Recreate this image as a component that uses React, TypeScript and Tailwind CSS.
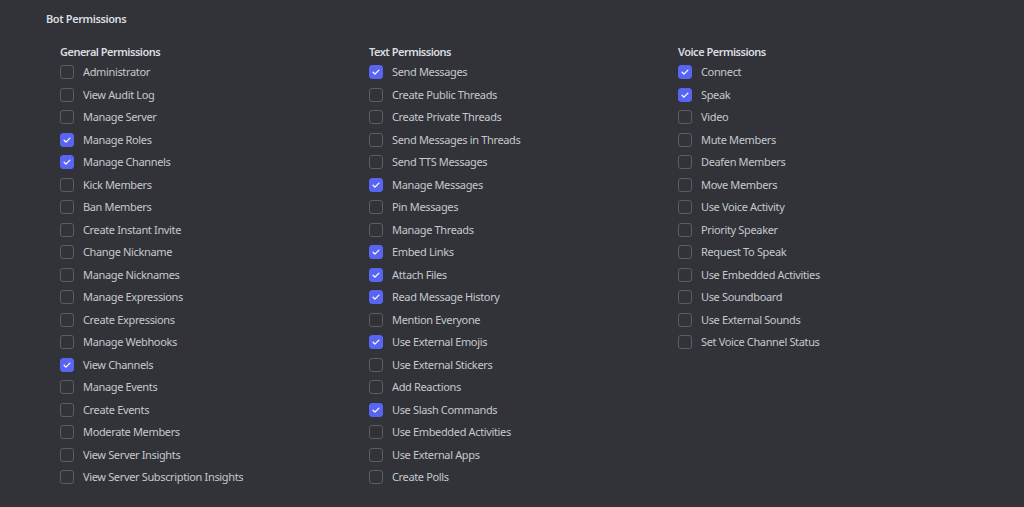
import { useState } from "react";

type Perm = { label: string; checked?: boolean };

const general: Perm[] = [
  { label: "Administrator" },
  { label: "View Audit Log" },
  { label: "Manage Server" },
  { label: "Manage Roles", checked: true },
  { label: "Manage Channels", checked: true },
  { label: "Kick Members" },
  { label: "Ban Members" },
  { label: "Create Instant Invite" },
  { label: "Change Nickname" },
  { label: "Manage Nicknames" },
  { label: "Manage Expressions" },
  { label: "Create Expressions" },
  { label: "Manage Webhooks" },
  { label: "View Channels", checked: true },
  { label: "Manage Events" },
  { label: "Create Events" },
  { label: "Moderate Members" },
  { label: "View Server Insights" },
  { label: "View Server Subscription Insights" },
];

const text: Perm[] = [
  { label: "Send Messages", checked: true },
  { label: "Create Public Threads" },
  { label: "Create Private Threads" },
  { label: "Send Messages in Threads" },
  { label: "Send TTS Messages" },
  { label: "Manage Messages", checked: true },
  { label: "Pin Messages" },
  { label: "Manage Threads" },
  { label: "Embed Links", checked: true },
  { label: "Attach Files", checked: true },
  { label: "Read Message History", checked: true },
  { label: "Mention Everyone" },
  { label: "Use External Emojis", checked: true },
  { label: "Use External Stickers" },
  { label: "Add Reactions" },
  { label: "Use Slash Commands", checked: true },
  { label: "Use Embedded Activities" },
  { label: "Use External Apps" },
  { label: "Create Polls" },
];

const voice: Perm[] = [
  { label: "Connect", checked: true },
  { label: "Speak", checked: true },
  { label: "Video" },
  { label: "Mute Members" },
  { label: "Deafen Members" },
  { label: "Move Members" },
  { label: "Use Voice Activity" },
  { label: "Priority Speaker" },
  { label: "Request To Speak" },
  { label: "Use Embedded Activities" },
  { label: "Use Soundboard" },
  { label: "Use External Sounds" },
  { label: "Set Voice Channel Status" },
];

function PermColumn({ title, items }: { title: string; items: Perm[] }) {
  const [state, setState] = useState(items.map((i) => !!i.checked));

  return (
    <div className="flex flex-col">
      <h3 className="h-[16px] text-[11px] font-semibold leading-[14px] tracking-[-0.5px] text-[#dbdee1]">
        {title}
      </h3>
      {items.map((p, idx) => (
        <label
          key={p.label}
          className="flex h-[22.5px] cursor-pointer items-center gap-[9px]"
        >
          <button
            type="button"
            onClick={() =>
              setState((s) => s.map((v, i) => (i === idx ? !v : v)))
            }
            className={`flex h-[14px] w-[14px] shrink-0 items-center justify-center rounded-[3px] border ${
              state[idx]
                ? "border-[#5865f2] bg-[#5865f2]"
                : "border-[#5c5e66] bg-transparent"
            }`}
          >
            {state[idx] && (
              <svg viewBox="0 0 24 24" className="h-[10px] w-[10px]">
                <path
                  d="M5 12.5l4.5 4.5L19 7.5"
                  fill="none"
                  stroke="white"
                  strokeWidth="3"
                  strokeLinecap="round"
                  strokeLinejoin="round"
                />
              </svg>
            )}
          </button>
          <span className="text-[11px] leading-[14px] tracking-[-0.35px] text-[#c4c9ce]">
            {p.label}
          </span>
        </label>
      ))}
    </div>
  );
}

export default function App() {
  return (
    <div
      className="min-h-[507px] w-full bg-[#313338] px-[46px] pt-[12px]"
      style={{ fontFamily: '"Noto Sans", "Open Sans", sans-serif' }}
    >
      <h2 className="h-[33px] text-[11px] font-semibold leading-[14px] tracking-[-0.4px] text-[#dbdee1]">
        Bot Permissions
      </h2>
      <div className="grid grid-cols-[309px_309px_309px] pl-[14px]">
        <PermColumn title="General Permissions" items={general} />
        <PermColumn title="Text Permissions" items={text} />
        <PermColumn title="Voice Permissions" items={voice} />
      </div>
    </div>
  );
}
